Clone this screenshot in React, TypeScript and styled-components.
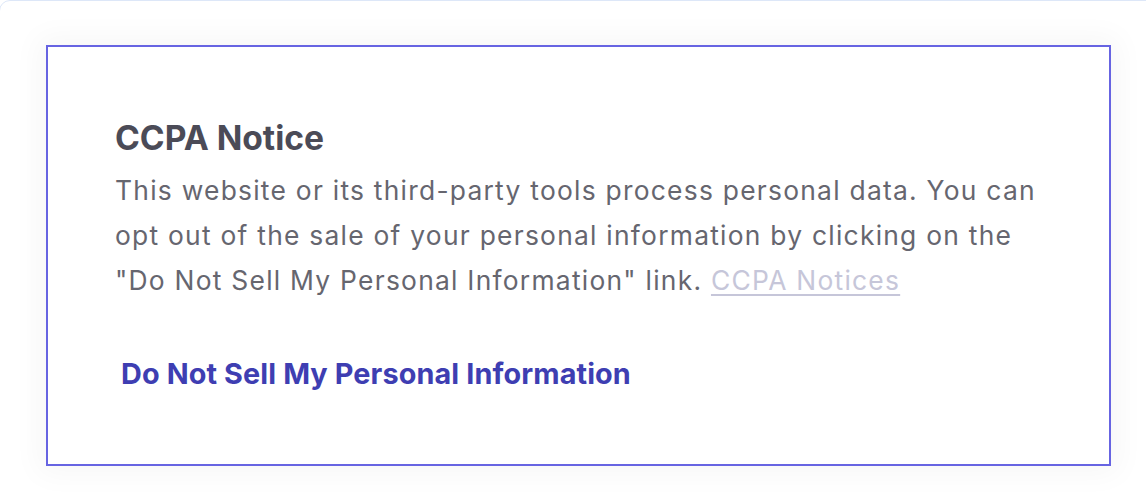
import styled, { createGlobalStyle } from 'styled-components';

const GlobalStyle = createGlobalStyle`
  html, body {
    margin: 0;
    padding: 0;
    background: #ffffff;
    overflow: hidden;
  }
  * {
    box-sizing: border-box;
  }
`

const Page = styled.div`
  width: 1146px;
  height: 504px;
  overflow: hidden;
  font-family: Inter, "Noto Sans", sans-serif;
`

const OuterCard = styled.div`
  margin: 0 -40px 0 -1px;
  height: 560px;
  border: 1px solid #dde7f8;
  border-radius: 11px;
  background: #ffffff;
  padding: 44px 0 0 46px;
`

const NoticeBox = styled.section`
  width: 1065px;
  height: 421px;
  border: 2px solid #6764e2;
  background: #ffffff;
  box-shadow: 0 0 28px 8px rgba(0, 0, 0, 0.035);
  padding: 71px 67px 0 67px;
  display: flex;
  flex-direction: column;
`

const Title = styled.h2`
  margin: 0;
  font-size: 33.6px;
  line-height: 40px;
  font-weight: 700;
  color: #4b4b57;
`

const Body = styled.p`
  margin: 10px 0 0;
  font-size: 26.4px;
  line-height: 45px;
  letter-spacing: 1.25px;
  color: #66666f;
`

const InlineLink = styled.a`
  color: #c6c6d9;
  text-decoration: underline;
  text-underline-offset: 4px;
`

const OptOut = styled.a`
  align-self: flex-start;
  margin: 53px 0 0 6px;
  font-size: 28.8px;
  line-height: 35px;
  font-weight: 700;
  letter-spacing: 0.12px;
  color: #3e3eb2;
  text-decoration: none;
`

export default function App() {
  return (
    <Page>
      <GlobalStyle />
      <OuterCard>
        <NoticeBox>
          <Title>CCPA Notice</Title>
          <Body>
            This website or its third-party tools process personal data. You can opt out of the sale of your personal
            information by clicking on the "Do Not Sell My Personal Information" link.{' '}
            <InlineLink href="#">CCPA Notices</InlineLink>
          </Body>
          <OptOut href="#">Do Not Sell My Personal Information</OptOut>
        </NoticeBox>
      </OuterCard>
    </Page>
  )
}
